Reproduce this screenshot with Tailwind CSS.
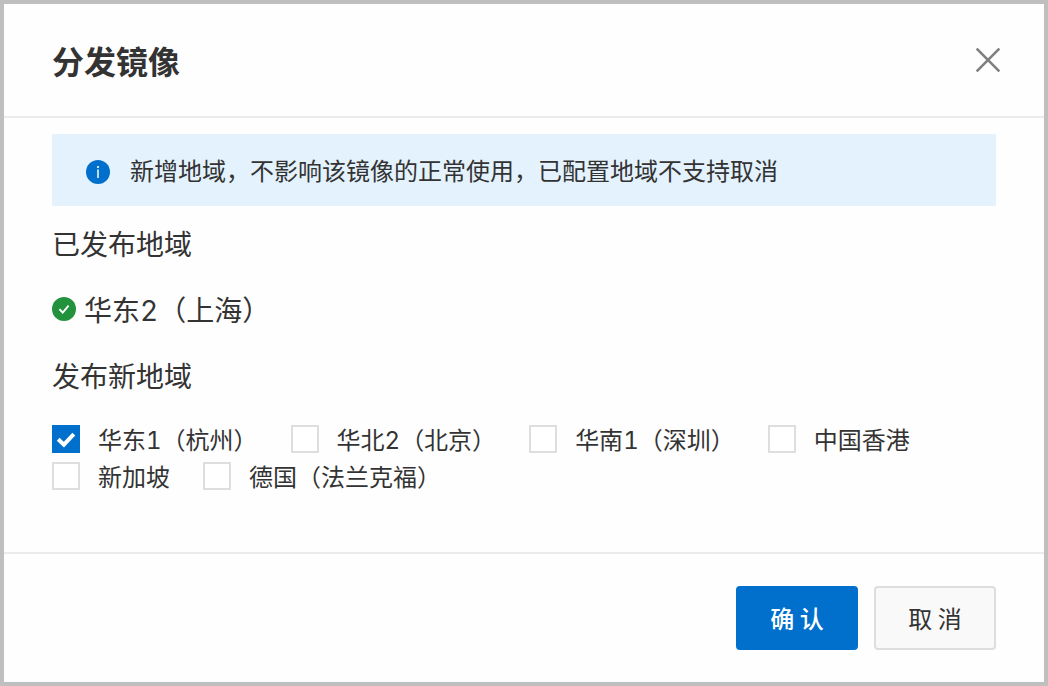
<!DOCTYPE html>
<html lang="zh-CN">
<head>
    <meta charset="UTF-8">
    <meta name="viewport" content="width=device-width, initial-scale=1.0">
    <script src="https://cdn.jsdelivr.net/npm/@tailwindcss/browser@4"></script>
    <title>分发镜像</title>
</head>
<body class="font-['Noto_Sans_CJK_SC',sans-serif] tabular-nums text-[#333333]">

    <div role="dialog" aria-labelledby="dialog-title" class="min-h-screen flex flex-col border-4 border-[#bfbfbf] bg-[#fefefe]">
        <!-- Header -->
        <header class="flex items-center justify-between border-b-2 border-[#ebebeb] pl-12 pr-10 py-8">
            <h1 id="dialog-title" class="text-[32px] leading-12 font-bold">分发镜像</h1>
            <button type="button" aria-label="关闭" class="p-1">
                <svg class="size-6" viewBox="0 0 24 24" fill="none" stroke="#808080" stroke-width="2.6">
                    <path d="M0.6 0.6L23.4 23.4M23.4 0.6L0.6 23.4"/>
                </svg>
            </button>
        </header>

        <!-- Content -->
        <main class="flex-grow px-12 pt-4">
            <div class="flex items-center bg-[#e3f2fd] pl-[34px] pr-4 py-4">
                <svg class="size-6 mr-5 mt-1 shrink-0" viewBox="0 0 24 24">
                    <circle cx="12" cy="12" r="12" fill="#0070cc"/>
                    <circle cx="12" cy="7" r="1.1" fill="#fff"/>
                    <path d="M12 9.6V18" stroke="#fff" stroke-width="1.5"/>
                </svg>
                <p class="text-2xl leading-10">新增地域，不影响该镜像的正常使用，已配置地域不支持取消</p>
            </div>

            <h2 class="mt-1 text-[28px] leading-[66px]">已发布地域</h2>
            <div class="flex items-center gap-2">
                <svg class="size-6 shrink-0" viewBox="0 0 24 24" fill="none">
                    <circle cx="12" cy="12" r="12" fill="#23923d"/>
                    <path d="M7.4 12.2L10.7 15.5L16.6 8.6" stroke="#fff" stroke-width="1.9"/>
                </svg>
                <p class="text-[28px] leading-[66px]">华东<span class="font-[Inter] leading-none">2</span>（上海）</p>
            </div>

            <fieldset>
                <legend class="text-[28px] leading-[66px]">发布新地域</legend>
                <div class="mt-3 flex flex-wrap gap-x-[33px] text-2xl leading-[37px]">
                    <label class="flex items-center gap-[18px]">
                        <span class="grid">
                            <input type="checkbox" checked class="peer col-start-1 row-start-1 appearance-none size-7 border-2 border-[#dedede] bg-white checked:border-[#0070cc] checked:bg-[#0070cc]">
                            <svg class="pointer-events-none invisible peer-checked:visible col-start-1 row-start-1 size-7" viewBox="0 0 28 28" fill="none" stroke="#fff" stroke-width="4">
                                <path d="M6.2 14.2L11.9 19.7L21.8 9.2"/>
                            </svg>
                        </span>
                        <span>华东<span class="font-[Inter] leading-none">1</span>（杭州）</span>
                    </label>
                    <label class="flex items-center gap-[18px]">
                        <input type="checkbox" class="appearance-none size-7 border-2 border-[#dedede] bg-white checked:bg-[#0070cc]">
                        <span>华北<span class="font-[Inter] leading-none">2</span>（北京）</span>
                    </label>
                    <label class="flex items-center gap-[18px]">
                        <input type="checkbox" class="appearance-none size-7 border-2 border-[#dedede] bg-white checked:bg-[#0070cc]">
                        <span>华南<span class="font-[Inter] leading-none">1</span>（深圳）</span>
                    </label>
                    <label class="flex items-center gap-[18px]">
                        <input type="checkbox" class="appearance-none size-7 border-2 border-[#dedede] bg-white checked:bg-[#0070cc]">
                        <span>中国香港</span>
                    </label>
                    <label class="flex items-center gap-[18px]">
                        <input type="checkbox" class="appearance-none size-7 border-2 border-[#dedede] bg-white checked:bg-[#0070cc]">
                        <span>新加坡</span>
                    </label>
                    <label class="flex items-center gap-[18px]">
                        <input type="checkbox" class="appearance-none size-7 border-2 border-[#dedede] bg-white checked:bg-[#0070cc]">
                        <span>德国（法兰克福）</span>
                    </label>
                </div>
            </fieldset>
        </main>

        <!-- Footer -->
        <footer class="flex justify-end gap-4 border-t-2 border-[#ebebeb] px-12 py-8 text-2xl leading-[60px]">
            <button type="button" class="min-w-[122px] rounded-sm border-2 border-[#0070cc] bg-[#0070cc] px-4 font-medium text-white">确 认</button>
            <button type="button" class="min-w-[122px] rounded-sm border-2 border-[#dedede] bg-[#f9f9f9] px-4">取 消</button>
        </footer>
    </div>

</body>
</html>
